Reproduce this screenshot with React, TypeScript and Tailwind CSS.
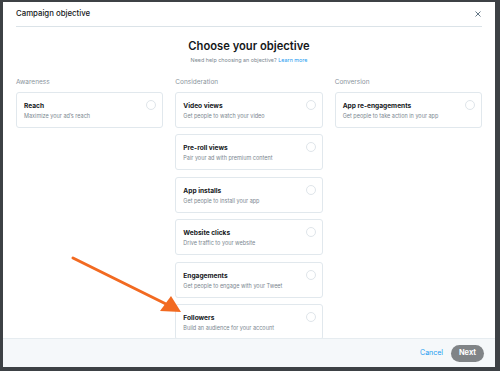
const columns = [
  {
    label: "Awareness",
    items: [{ title: "Reach", desc: "Maximize your ad’s reach" }],
  },
  {
    label: "Consideration",
    items: [
      { title: "Video views", desc: "Get people to watch your video" },
      { title: "Pre-roll views", desc: "Pair your ad with premium content" },
      { title: "App installs", desc: "Get people to install your app" },
      { title: "Website clicks", desc: "Drive traffic to your website" },
      { title: "Engagements", desc: "Get people to engage with your Tweet" },
      { title: "Followers", desc: "Build an audience for your account" },
    ],
  },
  {
    label: "Conversion",
    items: [{ title: "App re-engagements", desc: "Get people to take action in your app" }],
  },
];

function ObjectiveCard({ title, desc }: { title: string; desc: string }) {
  return (
    <div className="relative h-[36px] shrink-0 rounded-[3px] border border-[#e1e8ed] bg-white px-[7px] pt-[8px]">
      <p className="text-[6.6px] font-bold leading-[10px] text-[#14171a]">{title}</p>
      <p className="mt-px text-[5.5px] leading-[9px] text-[#7b8790]">{desc}</p>
      {/* radio */}
      <div className="absolute right-[6px] top-[7px] h-[10px] w-[10px] rounded-full border border-[#dfe5ea]" />
    </div>
  );
}

export default function App() {
  return (
    <div
      className="relative h-[371px] w-[500px] overflow-hidden bg-[#3d4145] pb-[4px] pl-[3px] pr-[5px] pt-[2px]"
      style={{ fontFamily: "Inter, 'Liberation Sans', sans-serif" }}
    >
      <div className="flex h-full flex-col bg-white">
        {/* Header */}
        <div className="px-[13px]">
          <div className="flex h-[25px] items-center justify-between border-b border-[#dbe3e8]">
            <span className="text-[7.8px] font-medium text-[#14171a]">Campaign objective</span>
            <svg width="6" height="6" viewBox="0 0 6 6" className="mr-[1px]">
              <path d="M0.5 0.5 L5.5 5.5 M5.5 0.5 L0.5 5.5" stroke="#657786" strokeWidth="1" />
            </svg>
          </div>
        </div>

        {/* Body */}
        <div className="flex-1 overflow-hidden px-[13px]">
          <h1 className="mt-[10px] text-center text-[11.2px] font-semibold leading-[18px] text-[#14171a]">
            Choose your objective
          </h1>
          <p className="text-center text-[5.4px] leading-[10px] text-[#7b8790]">
            Need help choosing an objective? <span className="text-[#1d9bf0]">Learn more</span>
          </p>

          <div className="mt-[12px] grid grid-cols-3 gap-x-[12px]">
            {columns.map((col) => (
              <div key={col.label} className="flex flex-col">
                <p className="text-[6.5px] leading-[10px] text-[#8a949c]">{col.label}</p>
                <div className="mt-[5px] flex flex-col gap-[6.4px]">
                  {col.items.map((it) => (
                    <ObjectiveCard key={it.title} title={it.title} desc={it.desc} />
                  ))}
                </div>
              </div>
            ))}
          </div>
        </div>

        {/* Footer */}
        <div className="flex h-[29px] items-center justify-end gap-[8px] border-t border-[#e6ecf0] bg-[#f5f8fa] pr-[11px]">
          <span className="text-[7px] text-[#1d9bf0]">Cancel</span>
          <button className="h-[17px] w-[33px] rounded-full bg-[#808487] text-[7.5px] font-bold text-white">
            Next
          </button>
        </div>
      </div>

      {/* Annotation arrow */}
      <svg className="pointer-events-none absolute left-0 top-0" width="500" height="371" viewBox="0 0 500 371">
        <line x1="73" y1="258" x2="166" y2="304" stroke="#f26a21" strokeWidth="3" strokeLinecap="round" />
        <polygon points="181,312 160,311 171,296" fill="#f26a21" />
      </svg>
    </div>
  );
}
